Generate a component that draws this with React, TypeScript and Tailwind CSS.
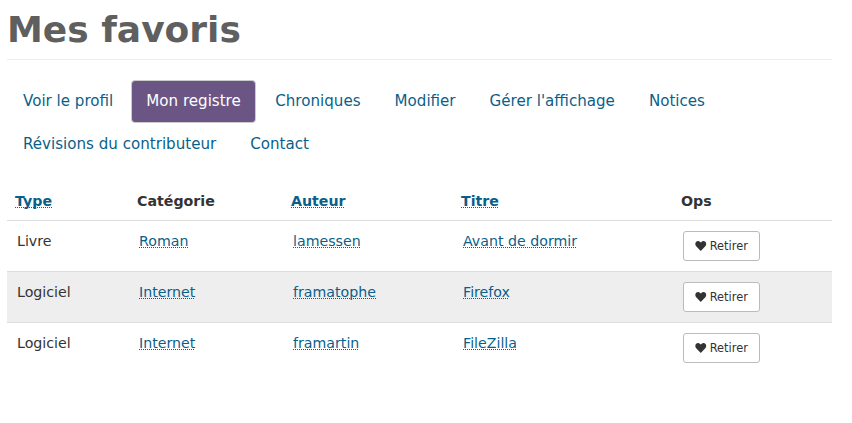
const NAV = [
  'Voir le profil',
  'Mon registre',
  'Chroniques',
  'Modifier',
  "Gérer l'affichage",
  'Notices',
  'Révisions du contributeur',
  'Contact',
];

const ROWS = [
  { type: 'Livre', category: 'Roman', author: 'lamessen', title: 'Avant de dormir' },
  { type: 'Logiciel', category: 'Internet', author: 'framatophe', title: 'Firefox' },
  { type: 'Logiciel', category: 'Internet', author: 'framartin', title: 'FileZilla' },
];

const linkClass =
  'text-[#0a5f8a] underline decoration-dotted decoration-1 underline-offset-1 [text-decoration-skip-ink:none]';

function Heart() {
  return (
    <svg viewBox="0 0 24 22" className="mr-[3px] mb-[2px] h-[10px] w-[11.500px] fill-[#333]" aria-hidden>
      <path d="M12 22 2 11.500C-.6 8.600-.6 4.200 1.800 1.900 4.300-.5 8.200-.4 10.600 2L12 3.500 13.400 2c2.400-2.400 6.300-2.500 8.800-.1 2.400 2.300 2.400 6.700-.2 9.600Z" />
    </svg>
  );
}

export default function App() {
  return (
    <div className="h-[423px] w-[852px] overflow-hidden bg-white font-['DejaVu_Sans',sans-serif] text-[#333]">
      <div className="ml-[7px] w-[825px]">
        <h1 className="h-[60px] border-b border-[#eee] pt-[9px] text-[36px] leading-[42px] font-bold text-[#5f5f5f]">
          Mes favoris
        </h1>

        <ul className="mt-5 flex flex-wrap gap-x-1 pl-px text-[15.100px]">
          {NAV.map((item) =>
            item === 'Mon registre' ? (
              <li
                key={item}
                className="flex h-[43px] items-center rounded border border-[#ccc] bg-[#6b5585] pr-[14.500px] pl-[14px] text-white"
              >
                {item}
              </li>
            ) : (
              <li
                key={item}
                className={
                  item === 'Voir le profil'
                    ? 'flex h-[43px] items-center pr-[14px] pl-[15px] text-[#0a5f8a]'
                    : 'flex h-[43px] items-center px-[15px] text-[#0a5f8a]'
                }
              >
                {item}
              </li>
            ),
          )}
        </ul>

        <table className="mt-[14px] w-[825px] table-fixed border-collapse text-[14.200px]">
          <colgroup>
            <col className="w-[122px]" />
            <col className="w-[154px]" />
            <col className="w-[170px]" />
            <col className="w-[220px]" />
            <col className="w-[159px]" />
          </colgroup>
          <thead>
            <tr className="h-[40px] border-b border-[#ddd] text-left font-bold">
              <th className="px-2 pt-1">
                <span className={linkClass}>Type</span>
              </th>
              <th className="px-2 pt-1">Catégorie</th>
              <th className="px-2 pt-1">
                <span className={linkClass}>Auteur</span>
              </th>
              <th className="px-2 pt-1">
                <span className={linkClass}>Titre</span>
              </th>
              <th className="px-2 pt-1">Ops</th>
            </tr>
          </thead>
          <tbody>
            {ROWS.map((row, i) => (
              <tr key={row.title} className={i === 1 ? 'border-b border-[#ddd] bg-[#eee]' : 'border-b border-[#ddd] last:border-b-0'}>
                <td className="h-[51px] px-[10px] pt-[10px] align-top leading-5">{row.type}</td>
                <td className="px-[10px] pt-[10px] align-top leading-5">
                  <span className={linkClass}>{row.category}</span>
                </td>
                <td className="px-[10px] pt-[10px] align-top leading-5">
                  <span className={linkClass}>{row.author}</span>
                </td>
                <td className="px-[10px] pt-[10px] align-top leading-5">
                  <span className={linkClass}>{row.title}</span>
                </td>
                <td className="px-[10px] pt-[10px] align-top">
                  <button className="flex h-[30px] w-[77px] items-center justify-center rounded-[3px] border border-[#bbb] bg-white pt-[2px] text-[11.400px] text-[#333]">
                    <Heart />
                    Retirer
                  </button>
                </td>
              </tr>
            ))}
          </tbody>
        </table>
      </div>
    </div>
  );
}
